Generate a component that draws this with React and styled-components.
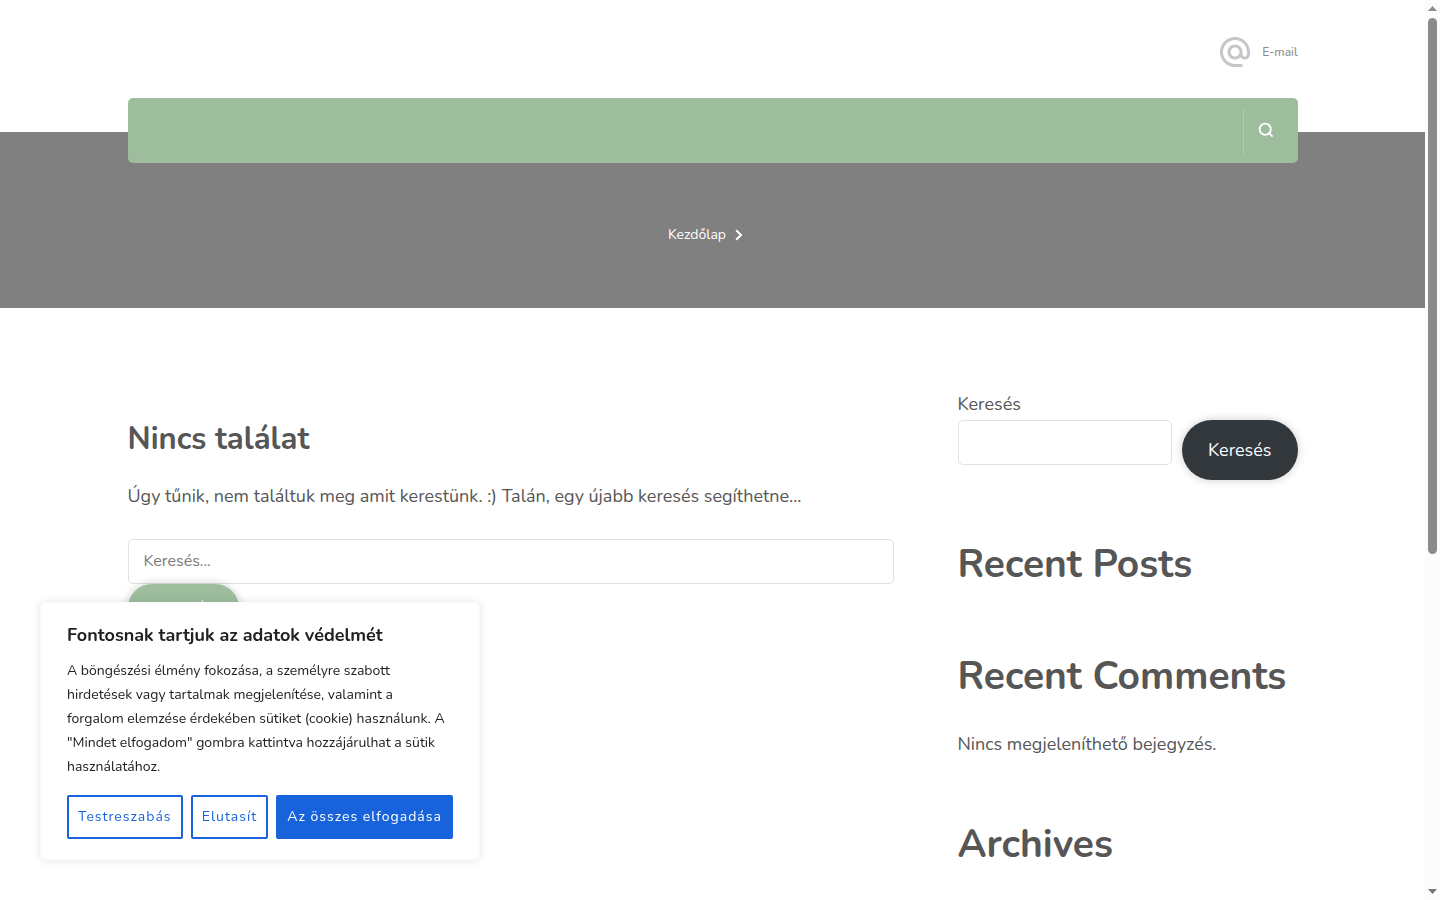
import React, { useState } from "react";
import styled, { createGlobalStyle } from "styled-components";
import { MdAlternateEmail } from "react-icons/md";

const GlobalStyle = createGlobalStyle`
  * {
    box-sizing: border-box;
  }
  body {
    margin: 0;
    background: #fff;
    color: #565656;
    font-family: Nunito, Lato, sans-serif;
    font-size: 18px;
    line-height: 32px;
  }
  button, input {
    font-family: inherit;
  }
`;

const Shell = styled.div`
  display: flex;
  height: 100vh;
`;

const Page = styled.div`
  flex: 1;
  min-width: 0;
  overflow-y: auto;
  scrollbar-width: none;
`;

const Container = styled.div`
  width: 100%;
  max-width: 1170px;
  margin: 0 auto;
`;

const TopBar = styled(Container)`
  display: flex;
  justify-content: flex-end;
  height: 98px;
  padding-top: 32px;
`;

const MailLink = styled.a`
  display: flex;
  align-items: center;
  gap: 9px;
  height: 39px;
  color: #8c8c8c;
  font-size: 12px;
  font-weight: 500;
  text-decoration: none;

  svg {
    color: #c9c5c6;
  }
`;

const NavBar = styled(Container)`
  position: relative;
  display: flex;
  align-items: center;
  justify-content: flex-end;
  height: 65px;
  padding-right: 16px;
  border-radius: 5px;
  background: #9dbd9d;
`;

const SearchToggle = styled.button`
  display: flex;
  align-items: center;
  height: 46px;
  padding: 0 8px 2px 14px;
  border: 0;
  border-left: 1px solid #b1cab1;
  background: none;
  color: #fff;
  cursor: pointer;
`;

const Hero = styled.div`
  display: flex;
  justify-content: center;
  height: 176px;
  margin-top: -31px;
  padding: 87px 14px 0 0;
  background: #808080;
`;

const Breadcrumb = styled.nav`
  display: flex;
  align-items: center;
  gap: 9px;
  height: 32px;

  a {
    color: #fff;
    font-size: 14px;
    text-decoration: none;
  }
`;

const Content = styled(Container)`
  display: grid;
  grid-template-columns: 1fr 340px;
  gap: 64px;
  padding: 80px 0;
`;

const Main = styled.main`
  padding-top: 27px;

  p {
    margin: 17px 0 27px;
  }
`;

const PageTitle = styled.h1`
  margin: 0;
  font-size: 31px;
  line-height: 48px;
`;

const TextInput = styled.input`
  display: block;
  width: 100%;
  min-width: 0;
  height: 45px;
  padding: 0 15px 2px;
  border: 1px solid #e2e2e2;
  border-radius: 5px;
  background: #fff;
  color: #565656;
  font-size: 16px;

  &::placeholder {
    color: #7a7a7a;
    opacity: 1;
  }
`;

const PillButton = styled.button`
  flex-shrink: 0;
  height: ${(props) => (props.$dark ? "60px" : "48px")};
  padding: 0 26px;
  border: 0;
  border-radius: 30px;
  background: ${(props) => (props.$dark ? "#32373c" : "#9dbd9d")};
  box-shadow: 0 0 10px rgba(0, 0, 0, 0.2);
  color: #fff;
  font-size: ${(props) => (props.$dark ? "18px" : "14px")};
  text-transform: ${(props) => (props.$dark ? "none" : "uppercase")};
  cursor: pointer;
`;

const Sidebar = styled.aside`
  display: flex;
  flex-direction: column;
  gap: 54px;
`;

const SearchRow = styled.div`
  display: flex;
  align-items: flex-start;
  gap: 10px;
  padding-bottom: 2px;
`;

const Widget = styled.section`
  h2 {
    margin: 0;
    font-size: 39px;
    line-height: 58px;
    white-space: nowrap;
  }
  p {
    margin: 22px 0 2px;
  }
  label {
    display: block;
  }
`;

const CookieCard = styled.section`
  position: fixed;
  left: 40px;
  bottom: 40px;
  width: 440px;
  padding: 20px 26px;
  border: 1px solid #fafafa;
  border-radius: 6px;
  background: #fff;
  box-shadow: 0 0 8px rgba(0, 0, 0, 0.12);
  color: #212121;

  h2 {
    margin: 0 0 12px;
    font-size: 18px;
    line-height: 24px;
  }
  p {
    margin: 0 0 16px;
    font-size: 14px;
    line-height: 24px;
  }
`;

const CookieActions = styled.div`
  display: flex;
  gap: 8px;
`;

const CookieButton = styled.button`
  flex: 1 0 auto;
  height: 44px;
  padding: 0 8px 2px;
  border: 2px solid #1863dc;
  border-radius: 2px;
  background: ${(props) => (props.$primary ? "#1863dc" : "#fff")};
  color: ${(props) => (props.$primary ? "#fff" : "#1863dc")};
  font-size: 14px;
  letter-spacing: 1px;
  cursor: pointer;
`;

const ScrollRail = styled.div`
  display: flex;
  flex-direction: column;
  align-items: center;
  width: 15px;
  padding: 6px 0;
  background: #fcfcfc;
`;

const ScrollTrack = styled.div`
  flex: 1;
  margin: 7px 0 6px;
`;

const ScrollThumb = styled.div`
  width: 9px;
  height: 62%;
  border-radius: 5px;
  background: #8b8b8b;
`;

const App = () => {
  const [query, setQuery] = useState("");
  const [sideQuery, setSideQuery] = useState("");

  return (
    <Shell>
      <GlobalStyle />
      <Page>
        <header>
          <TopBar>
            <MailLink href="#email">
              <MdAlternateEmail size={36} />
              E-mail
            </MailLink>
          </TopBar>
          <NavBar>
            <SearchToggle type="button" aria-label="Keresés megnyitása">
              <svg width="16" height="16" viewBox="0 0 16 16" fill="none" stroke="currentColor" strokeWidth="1.8">
                <circle cx="7.2" cy="7.2" r="5.6" />
                <path d="M10.8 10.8L14.6 14.6" />
              </svg>
            </SearchToggle>
          </NavBar>
        </header>

        <Hero>
          <Breadcrumb>
            <a href="#home">Kezdőlap</a>
            <svg width="8" height="12" viewBox="0 0 8 12" fill="none" stroke="#fff" strokeWidth="2">
              <path d="M1.2 1.2L6 6L1.2 10.8" />
            </svg>
          </Breadcrumb>
        </Hero>

        <Content>
          <Main>
            <PageTitle>Nincs találat</PageTitle>
            <p>Úgy tűnik, nem találtuk meg amit kerestünk. :) Talán, egy újabb keresés segíthetne...</p>
            <form onSubmit={(e) => e.preventDefault()}>
              <TextInput
                type="search"
                aria-label="Keresés"
                placeholder="Keresés..."
                value={query}
                onChange={(e) => setQuery(e.target.value)}
              />
              <PillButton type="submit">Keresés</PillButton>
            </form>
          </Main>

          <Sidebar>
            <Widget as="form" onSubmit={(e) => e.preventDefault()}>
              <label htmlFor="side-search">Keresés</label>
              <SearchRow>
                <TextInput
                  id="side-search"
                  type="search"
                  value={sideQuery}
                  onChange={(e) => setSideQuery(e.target.value)}
                />
                <PillButton $dark type="submit">Keresés</PillButton>
              </SearchRow>
            </Widget>
            <Widget>
              <h2>Recent Posts</h2>
            </Widget>
            <Widget>
              <h2>Recent Comments</h2>
              <p>Nincs megjeleníthető bejegyzés.</p>
            </Widget>
            <Widget>
              <h2>Archives</h2>
            </Widget>
          </Sidebar>
        </Content>
      </Page>

      <ScrollRail aria-hidden="true">
        <svg width="9" height="5" viewBox="0 0 9 5" fill="#8b8b8b">
          <path d="M4.5 0L9 5H0Z" />
        </svg>
        <ScrollTrack>
          <ScrollThumb />
        </ScrollTrack>
        <svg width="9" height="5" viewBox="0 0 9 5" fill="#777">
          <path d="M0 0H9L4.5 5Z" />
        </svg>
      </ScrollRail>

      <CookieCard aria-label="Sütik">
        <h2>Fontosnak tartjuk az adatok védelmét</h2>
        <p>
          A böngészési élmény fokozása, a személyre szabott hirdetések vagy tartalmak megjelenítése,
          valamint a forgalom elemzése érdekében sütiket (cookie) használunk. A "Mindet elfogadom"
          gombra kattintva hozzájárulhat a sütik használatához.
        </p>
        <CookieActions>
          <CookieButton type="button">Testreszabás</CookieButton>
          <CookieButton type="button">Elutasít</CookieButton>
          <CookieButton type="button" $primary>Az összes elfogadása</CookieButton>
        </CookieActions>
      </CookieCard>
    </Shell>
  );
};

export default App;
